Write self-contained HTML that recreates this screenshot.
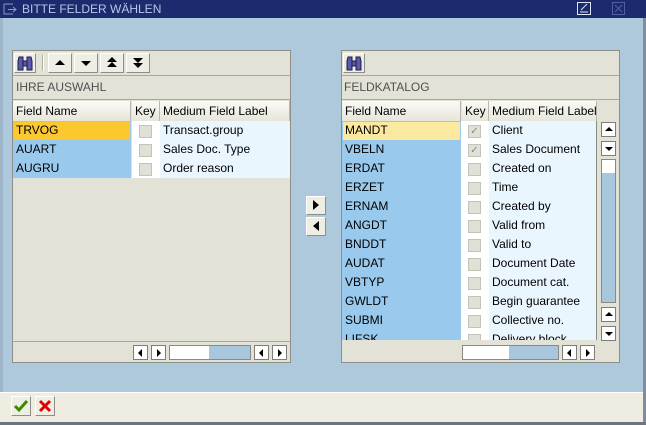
<!DOCTYPE html>
<html><head><meta charset="utf-8"><style>
*{margin:0;padding:0;box-sizing:border-box}
body{width:646px;height:425px;position:relative;background:#afc9dc;font-family:"Liberation Sans",Arial,sans-serif;font-size:12px;overflow:hidden}
.a{position:absolute}
.title{left:0;top:0;width:646px;height:18px;background:#1c2a6e;color:#b9c6e6;font-size:12px;line-height:18px;padding-left:22px}
.panel{background:#e3e2d7;border:1px solid #8f8f8a}
.btn{position:absolute;background:#efeee4;border:1px solid #fff;border-right-color:#8e8e88;border-bottom-color:#8e8e88}
.hdr{position:absolute;background:linear-gradient(#fbfbf6,#e6e5da);border-right:1px solid #b9b8ae;line-height:20px;padding-left:3px;color:#000}
.cell{position:absolute;line-height:19px;padding-left:3px;color:#000;margin-top:1px}
.sb{position:absolute;width:15px;height:15px;background:#fff;border:1px solid #7e7e78}
.cb{position:absolute;width:13px;height:13px;background:#e1e0d6;border:1px solid #c4c3b8}
.tri{position:absolute;width:0;height:0}
</style></head><body>
<div class="a title">BITTE FELDER WÄHLEN</div>
<svg class="a" style="left:3px;top:3px" width="16" height="12"><path d="M1 1h9M1 1v10h9M10 4l3 2.5-3 2.5M5 6.5h8" fill="none" stroke="#8a98c8" stroke-width="1"/></svg>
<svg class="a" style="left:577px;top:2px" width="15" height="14"><rect x="0.5" y="0.5" width="13" height="12" fill="none" stroke="#dde4f6"/><path d="M3 10h8M4 8l6-6" stroke="#dde4f6" fill="none"/></svg>
<svg class="a" style="left:612px;top:2px" width="14" height="14"><rect x="0.5" y="0.5" width="12" height="12" fill="none" stroke="#5060a0"/><path d="M3 3l7 7M10 3l-7 7" stroke="#5060a0"/></svg>
<div class="a" style="left:0;top:18px;width:3px;height:374px;background:#9fb6c8"></div>
<div class="a" style="left:0;top:392px;width:646px;height:30px;background:#efede2;border-top:1px solid #fff"></div>
<div class="a" style="left:0;top:422px;width:646px;height:3px;background:#6c7680"></div>
<div class="a" style="left:643px;top:18px;width:3px;height:404px;background:#7f8e9c"></div>
<div class="btn" style="left:11px;top:396px;width:20px;height:20px"><svg width="18" height="18"><path d="M3 9l4 4 8-9" fill="none" stroke="#3a8a00" stroke-width="3"/></svg></div>
<div class="btn" style="left:35px;top:396px;width:20px;height:20px"><svg width="18" height="18"><path d="M4 4l10 10M14 4L4 14" fill="none" stroke="#e00000" stroke-width="3"/></svg></div>

<!-- left panel -->
<div class="a panel" style="left:12px;top:50px;width:279px;height:313px"></div>
<div class="a" style="left:13px;top:75px;width:277px;height:1px;background:#a8a79e"></div>
<div class="a" style="left:13px;top:99px;width:277px;height:1px;background:#a8a79e"></div>
<div class="btn" style="left:14px;top:53px;width:22px;height:20px"><svg width="20" height="18"><path d="M4 3h4v13H3V7zM12 3h4l1 4v9h-5zM8 7h4v5H8z" fill="#5a5aa8" stroke="#1a1a50"/></svg></div>
<div class="a" style="left:42px;top:55px;width:2px;height:16px;background:#fff;border-left:1px solid #b0afa6"></div>
<div class="btn" style="left:48px;top:53px;width:24px;height:20px"></div>
<div class="btn" style="left:74px;top:53px;width:24px;height:20px"></div>
<div class="btn" style="left:100px;top:53px;width:24px;height:20px"></div>
<div class="btn" style="left:126px;top:53px;width:24px;height:20px"></div>
<div class="tri" style="left:55px;top:60px;border:5px solid transparent;border-bottom:5px solid #000;border-top:0"></div>
<div class="tri" style="left:81px;top:61px;border:5px solid transparent;border-top:5px solid #000;border-bottom:0"></div>
<div class="tri" style="left:107px;top:57px;border:5px solid transparent;border-bottom:5px solid #000;border-top:0"></div>
<div class="tri" style="left:107px;top:62px;border:5px solid transparent;border-bottom:5px solid #000;border-top:0"></div>
<div class="tri" style="left:133px;top:58px;border:5px solid transparent;border-top:5px solid #000;border-bottom:0"></div>
<div class="tri" style="left:133px;top:63px;border:5px solid transparent;border-top:5px solid #000;border-bottom:0"></div>
<div class="cell" style="left:13px;top:77px;color:#505050">IHRE AUSWAHL</div>
<div class="hdr" style="left:13px;top:101px;width:118px;height:20px">Field Name</div>
<div class="hdr" style="left:132px;top:101px;width:28px;height:20px">Key</div>
<div class="hdr" style="left:160px;top:101px;width:130px;height:20px">Medium Field Label</div>
<div class="a" style="left:13px;top:121px;width:118px;height:57px;background:#99c9ec"></div>
<div class="a" style="left:14px;top:122px;width:116px;height:18px;background:#fcc830"></div>
<div class="a" style="left:132px;top:121px;width:28px;height:57px;background:#fff"></div>
<div class="a" style="left:160px;top:121px;width:130px;height:57px;background:#eaf6fd"></div>
<div class="cell" style="left:13px;top:120px">TRVOG</div>
<div class="cell" style="left:13px;top:139px">AUART</div>
<div class="cell" style="left:13px;top:158px">AUGRU</div>
<div class="cb" style="left:139px;top:125px"></div>
<div class="cb" style="left:139px;top:144px"></div>
<div class="cb" style="left:139px;top:163px"></div>
<div class="cell" style="left:160px;top:120px">Transact.group</div>
<div class="cell" style="left:160px;top:139px">Sales Doc. Type</div>
<div class="cell" style="left:160px;top:158px">Order reason</div>
<div class="a" style="left:13px;top:341px;width:277px;height:1px;background:#a8a79e"></div>
<div class="sb" style="left:133px;top:345px"></div>
<div class="sb" style="left:151px;top:345px"></div>
<div class="a" style="left:169px;top:345px;width:82px;height:15px;background:#a9c7dc;border:1px solid #8a8a84"></div>
<div class="a" style="left:170px;top:346px;width:39px;height:13px;background:#fff"></div>
<div class="sb" style="left:254px;top:345px"></div>
<div class="sb" style="left:272px;top:345px"></div>
<div class="tri" style="left:138px;top:349px;border:4px solid transparent;border-right:4px solid #000;border-left:0"></div>
<div class="tri" style="left:157px;top:349px;border:4px solid transparent;border-left:4px solid #000;border-right:0"></div>
<div class="tri" style="left:259px;top:349px;border:4px solid transparent;border-right:4px solid #000;border-left:0"></div>
<div class="tri" style="left:278px;top:349px;border:4px solid transparent;border-left:4px solid #000;border-right:0"></div>

<!-- middle buttons -->
<div class="btn" style="left:306px;top:196px;width:20px;height:19px"></div>
<div class="btn" style="left:306px;top:217px;width:20px;height:19px"></div>
<div class="tri" style="left:313px;top:200px;border:5px solid transparent;border-left:6px solid #000;border-right:0"></div>
<div class="tri" style="left:313px;top:221px;border:5px solid transparent;border-right:6px solid #000;border-left:0"></div>

<!-- right panel -->
<div class="a panel" style="left:341px;top:50px;width:279px;height:313px"></div>
<div class="a" style="left:342px;top:75px;width:277px;height:1px;background:#a8a79e"></div>
<div class="a" style="left:342px;top:99px;width:277px;height:1px;background:#a8a79e"></div>
<div class="btn" style="left:343px;top:53px;width:22px;height:20px"><svg width="20" height="18"><path d="M4 3h4v13H3V7zM12 3h4l1 4v9h-5zM8 7h4v5H8z" fill="#5a5aa8" stroke="#1a1a50"/></svg></div>
<div class="cell" style="left:341px;top:77px;color:#505050">FELDKATALOG</div>
<div class="hdr" style="left:342px;top:101px;width:119px;height:20px">Field Name</div>
<div class="hdr" style="left:462px;top:101px;width:27px;height:20px">Key</div>
<div class="hdr" style="left:489px;top:101px;width:108px;height:20px;overflow:hidden;white-space:nowrap">Medium Field Label</div>
<div class="a" style="left:342px;top:121px;width:119px;height:219px;background:#99c9ec"></div>
<div class="a" style="left:343px;top:122px;width:117px;height:18px;background:#fce9a0"></div>
<div class="a" style="left:461px;top:121px;width:28px;height:219px;background:#fff"></div>
<div class="a" style="left:489px;top:121px;width:108px;height:219px;background:#eaf6fd;border-right:1px solid #8a8a84"></div>
<div class="a" style="left:341px;top:121px;width:260px;height:219px;overflow:hidden">
<div style="position:relative">
<div class="cell" style="left:1px;top:-1px">MANDT</div><div class="cell" style="left:148px;top:-1px">Client</div>
<div class="cell" style="left:1px;top:18px">VBELN</div><div class="cell" style="left:148px;top:18px">Sales Document</div>
<div class="cell" style="left:1px;top:37px">ERDAT</div><div class="cell" style="left:148px;top:37px">Created on</div>
<div class="cell" style="left:1px;top:56px">ERZET</div><div class="cell" style="left:148px;top:56px">Time</div>
<div class="cell" style="left:1px;top:75px">ERNAM</div><div class="cell" style="left:148px;top:75px">Created by</div>
<div class="cell" style="left:1px;top:94px">ANGDT</div><div class="cell" style="left:148px;top:94px">Valid from</div>
<div class="cell" style="left:1px;top:113px">BNDDT</div><div class="cell" style="left:148px;top:113px">Valid to</div>
<div class="cell" style="left:1px;top:132px">AUDAT</div><div class="cell" style="left:148px;top:132px">Document Date</div>
<div class="cell" style="left:1px;top:151px">VBTYP</div><div class="cell" style="left:148px;top:151px">Document cat.</div>
<div class="cell" style="left:1px;top:170px">GWLDT</div><div class="cell" style="left:148px;top:170px">Begin guarantee</div>
<div class="cell" style="left:1px;top:189px">SUBMI</div><div class="cell" style="left:148px;top:189px">Collective no.</div>
<div class="cell" style="left:1px;top:208px">LIFSK</div><div class="cell" style="left:148px;top:208px">Delivery block</div>
<div class="cb" style="left:127px;top:4px;color:#888;font-size:10px;line-height:11px;text-align:center">✓</div>
<div class="cb" style="left:127px;top:23px;color:#888;font-size:10px;line-height:11px;text-align:center">✓</div>
<div class="cb" style="left:127px;top:42px"></div><div class="cb" style="left:127px;top:61px"></div>
<div class="cb" style="left:127px;top:80px"></div><div class="cb" style="left:127px;top:99px"></div>
<div class="cb" style="left:127px;top:118px"></div><div class="cb" style="left:127px;top:137px"></div>
<div class="cb" style="left:127px;top:156px"></div><div class="cb" style="left:127px;top:175px"></div>
<div class="cb" style="left:127px;top:194px"></div><div class="cb" style="left:127px;top:213px"></div>
</div></div>
<div class="sb" style="left:601px;top:122px"></div>
<div class="sb" style="left:601px;top:141px"></div>
<div class="a" style="left:601px;top:159px;width:15px;height:144px;background:#a9c7dc;border:1px solid #8a8a84"></div>
<div class="a" style="left:602px;top:160px;width:13px;height:13px;background:#fff"></div>
<div class="sb" style="left:601px;top:307px"></div>
<div class="sb" style="left:601px;top:326px"></div>
<div class="tri" style="left:605px;top:127px;border:4px solid transparent;border-bottom:4px solid #000;border-top:0"></div>
<div class="tri" style="left:605px;top:147px;border:4px solid transparent;border-top:4px solid #000;border-bottom:0"></div>
<div class="tri" style="left:605px;top:312px;border:4px solid transparent;border-bottom:4px solid #000;border-top:0"></div>
<div class="tri" style="left:605px;top:332px;border:4px solid transparent;border-top:4px solid #000;border-bottom:0"></div>
<div class="a" style="left:462px;top:345px;width:97px;height:15px;background:#a9c7dc;border:1px solid #8a8a84"></div>
<div class="a" style="left:463px;top:346px;width:46px;height:13px;background:#fff"></div>
<div class="sb" style="left:562px;top:345px"></div>
<div class="sb" style="left:580px;top:345px"></div>
<div class="tri" style="left:567px;top:349px;border:4px solid transparent;border-right:4px solid #000;border-left:0"></div>
<div class="tri" style="left:586px;top:349px;border:4px solid transparent;border-left:4px solid #000;border-right:0"></div>
</body></html>
